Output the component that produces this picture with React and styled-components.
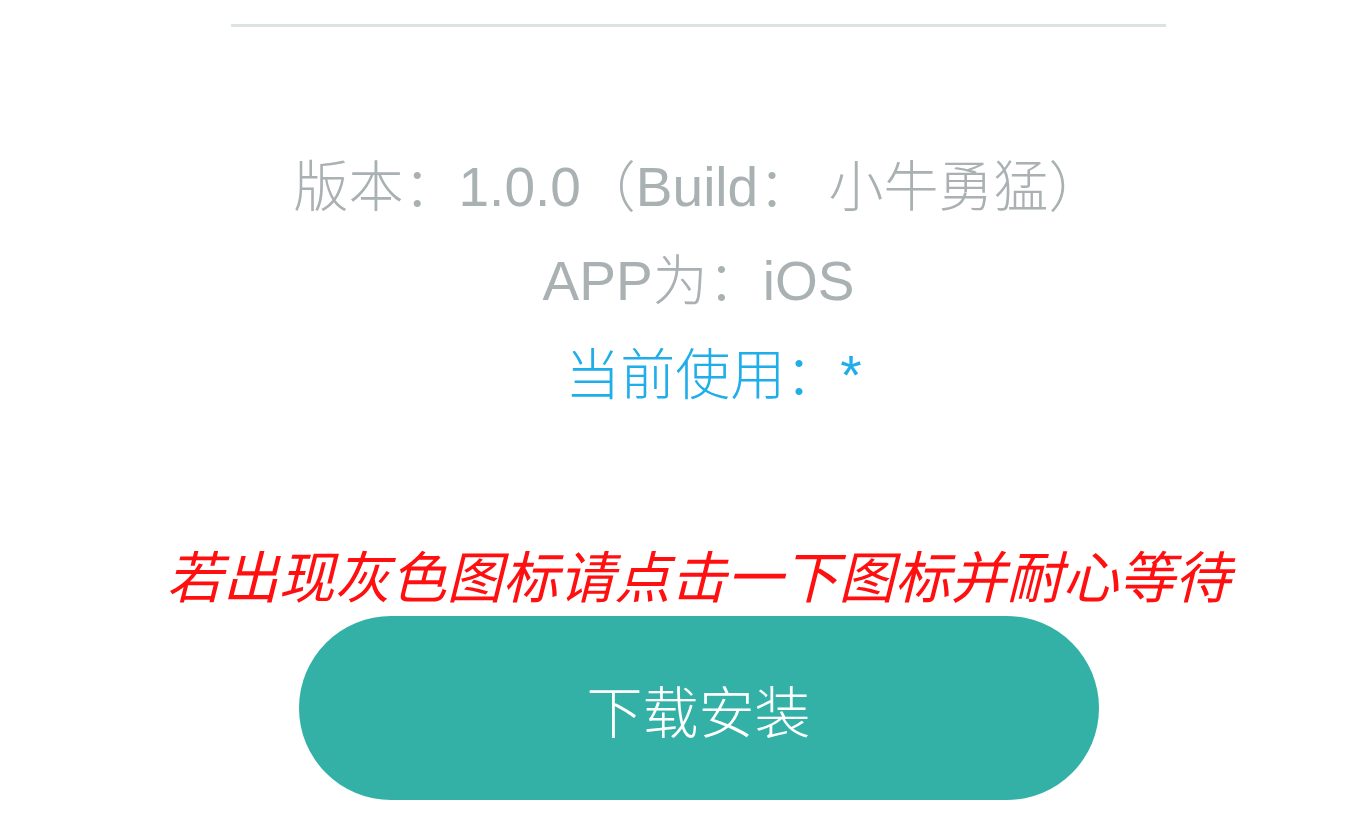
import React from 'react';
import styled, { createGlobalStyle } from 'styled-components';

const GlobalStyle = createGlobalStyle`
  html, body {
    margin: 0;
    padding: 0;
    background: #ffffff;
  }
  body {
    font-family: "Liberation Sans", "Noto Sans CJK SC", sans-serif;
  }
`;

const Page = styled.div`
  box-sizing: border-box;
  width: 1364px;
  height: 832px;
  padding-left: 33px;
  overflow: hidden;
  display: flex;
  flex-direction: column;
  align-items: center;
`;

const Divider = styled.div`
  width: 935px;
  height: 3px;
  margin-top: 24px;
  background: #dce3e3;
`;

const InfoList = styled.div`
  margin-top: 113px;
  display: flex;
  flex-direction: column;
  align-items: center;
`;

const InfoLine = styled.div`
  font-size: 55px;
  line-height: 94px;
  font-weight: 300;
  color: ${p => (p.$accent ? '#1faeea' : '#a9b1b3')};
  padding-left: ${p => (p.$accent ? '30px' : '0')};
  white-space: nowrap;
`;

const Notice = styled.div`
  margin-top: 124px;
  font-size: 56px;
  line-height: 66px;
  font-style: italic;
  color: #ff0f0f;
  white-space: nowrap;
`;

const DownloadButton = styled.button`
  margin-top: 4px;
  width: 800px;
  height: 184px;
  border: none;
  border-radius: 92px;
  background: #33b1a7;
  color: #ffffff;
  font-family: "Liberation Sans", "Noto Sans CJK SC", sans-serif;
  font-size: 56px;
  font-weight: 300;
  cursor: pointer;
  display: flex;
  align-items: center;
  justify-content: center;
`;

export default function App() {
  return (
    <>
      <GlobalStyle />
      <Page>
        <Divider />
        <InfoList>
          <InfoLine>版本：1.0.0（Build： 小牛勇猛）</InfoLine>
          <InfoLine>APP为：iOS</InfoLine>
          <InfoLine $accent>当前使用：*</InfoLine>
        </InfoList>
        <Notice>若出现灰色图标请点击一下图标并耐心等待</Notice>
        <DownloadButton>下载安装</DownloadButton>
      </Page>
    </>
  );
}
